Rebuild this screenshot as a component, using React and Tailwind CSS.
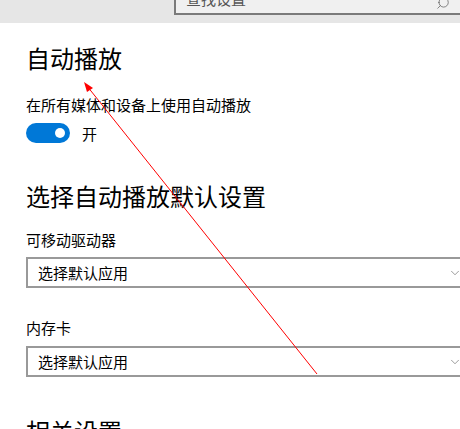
import { ChevronDown, Search } from 'lucide-react';

const font = { fontFamily: '"Noto Sans CJK SC", "Noto Sans", sans-serif' };

function Toggle({ on }) {
  return (
    <div className="flex items-center gap-3">
      <div className={`w-[44px] h-[20px] rounded-full flex items-center px-[5px] ${on ? 'bg-[#0078d7] justify-end' : 'bg-white border-2 border-black'}`}>
        <div className="w-[10px] h-[10px] rounded-full bg-white" />
      </div>
      <span className="text-[15px] text-black leading-none">{on ? '开' : '关'}</span>
    </div>
  );
}

function Dropdown({ value }) {
  return (
    <div className="w-[440px] h-[31px] border-2 border-[#999999] bg-white flex items-center justify-between pl-[10px] pr-[2px] shrink-0">
      <span className="text-[15px] text-black leading-none">{value}</span>
      <ChevronDown size={14} strokeWidth={1} className="text-[#555]" />
    </div>
  );
}

export default function App() {
  return (
    <div className="relative w-[460px] h-[429px] overflow-hidden bg-white" style={font}>
      {/* top bar with search box */}
      <div className="h-[23px] bg-[#e6e6e6] flex items-start">
        <div className="ml-[174px] w-[300px] h-[15px] border-l-2 border-b-2 border-[#7a7a7a] bg-[#f0f0f0] flex items-end justify-between pl-[10px] pr-[10px] overflow-hidden">
          <span className="text-[15px] text-[#555] leading-none mb-[7px]">查找设置</span>
          <Search size={14} strokeWidth={1.2} className="text-[#555] mb-[3px] -scale-x-100" />
        </div>
      </div>

      <div className="flex h-[406px]">
        {/* nav strip */}
        <div className="w-[2px] bg-[#f0f0f0] flex flex-col">
          <div className="h-[192px]" />
          <div className="h-[49px] bg-[#66aef0]" />
        </div>

        {/* content */}
        <div className="flex-1 pl-[26px] flex flex-col">
          <h1 className="text-[24px] font-normal text-black leading-none mt-[23px]">自动播放</h1>
          <p className="text-[15px] text-black leading-none mt-[27px]">在所有媒体和设备上使用自动播放</p>
          <div className="mt-[11px]">
            <Toggle on />
          </div>

          <h2 className="text-[24px] font-normal text-black leading-none mt-[41px]">选择自动播放默认设置</h2>
          <p className="text-[15px] text-black leading-none mt-[24px]">可移动驱动器</p>
          <div className="mt-[10px]">
            <Dropdown value="选择默认应用" />
          </div>
          <p className="text-[15px] text-black leading-none mt-[32px]">内存卡</p>
          <div className="mt-[11px]">
            <Dropdown value="选择默认应用" />
          </div>

          <h2 className="text-[24px] font-normal text-black leading-none mt-[42px]">相关设置</h2>
        </div>
      </div>

      {/* red annotation arrow */}
      <svg className="absolute inset-0 pointer-events-none" width="460" height="429">
        <line x1="317" y1="374" x2="87" y2="86" stroke="#ff0000" strokeWidth="1" />
        <polygon points="84,82 93,88 87,92" fill="#ff0000" />
      </svg>
    </div>
  );
}
